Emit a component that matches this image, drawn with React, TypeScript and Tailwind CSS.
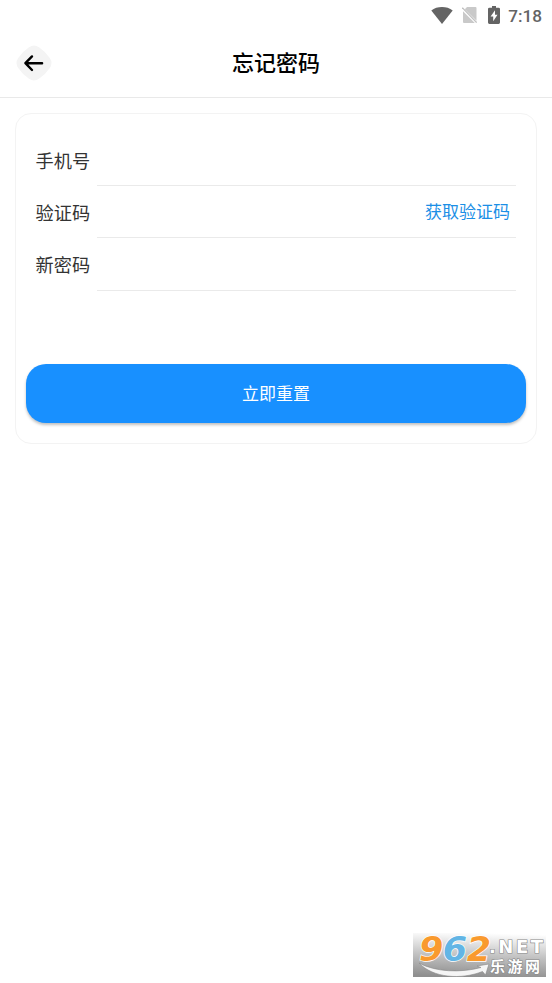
import React from 'react';

const StatusBar = () => {
  return (
    <div className="flex justify-end items-center pr-[10px] h-[30px] text-[#646464]">
      <svg className="mr-[9px] w-[22px] h-[17px]" viewBox="0 0 22 16" preserveAspectRatio="none" fill="currentColor">
        <path d="M0.3 3.2C3.2 1 7 0 11 0s7.800 1 10.700 3.200L11 16z" />
      </svg>
      <svg className="mr-[11px] w-[15px] h-[16px]" viewBox="0 0 15 16">
        <path d="M5 0h8.500q1 0 1 1v12.800L2.800 2.200zM1 4.200L12.800 16H2q-1 0-1-1z" fill="#c9c9c9" />
        <path d="M0.300 0.600L14.700 15.600" stroke="#c0c0c0" strokeWidth="1.300" />
      </svg>
      <svg className="mr-[8px] w-[12px] h-[18px]" viewBox="0 0 12 18">
        <path
          d="M4 0h4v1.800h2.600q1.400 0 1.400 1.300v13.500q0 1.400-1.400 1.400H1.400Q0 18 0 16.600V3.100q0-1.300 1.400-1.300H4z"
          fill="currentColor"
        />
        <path d="M7 4.200L2.600 10.600h2.600v4.700l4.300-6.500H7z" fill="#fff" />
      </svg>
      <span className="pt-[1px] font-['Roboto',sans-serif] font-medium text-[17.2px] leading-[28px]">7:18</span>
    </div>
  );
};

const Header = () => {
  return (
    <header className="grid grid-cols-[52px_1fr_52px] items-center border-[#e9e9e9] border-b h-[68px]">
      <button className="justify-self-end pb-[1px]" aria-label="返回">
        <svg className="block w-[36px] h-[36px]" viewBox="0 0 36 36" fill="none">
          <path
            d="M13 2.200Q18-1.200 23 2.200Q29.500 6.500 33.800 13Q37.200 18 33.800 23Q29.500 29.500 23 33.800Q18 37.200 13 33.800Q6.500 29.500 2.200 23Q-1.200 18 2.200 13Q6.500 6.500 13 2.200z"
            fill="#f4f4f4"
          />
          <path
            d="M16 11.400L9.400 18.200l6.600 6.800M9.800 18.200h16.300"
            stroke="#000"
            strokeWidth="2.400"
            strokeLinecap="round"
            strokeLinejoin="round"
          />
        </svg>
      </button>
      <h1 className="pb-[5px] font-medium text-[22px] text-black text-center leading-[32px]">忘记密码</h1>
    </header>
  );
};

const Field = ({ label, children }: { label: string; children?: React.ReactNode }) => {
  return (
    <div className="flex items-center h-[52.2px]">
      <label className="pt-[0.500px] w-[61px] text-[#333] text-[18.2px] whitespace-nowrap">{label}</label>
      <div className="flex flex-1 justify-end items-center pr-[6px] border-[#eaeaea] border-b h-full">{children}</div>
    </div>
  );
};

const Watermark = () => {
  return (
    <svg className="block w-[133px] h-[44px] overflow-visible" viewBox="0 0 133 44">
      <defs>
        <linearGradient id="plate" x1="0.550" y1="0" x2="0.450" y2="1">
          <stop offset="0" stopColor="#ffffff" />
          <stop offset="0.500" stopColor="#c4c4c4" />
          <stop offset="1" stopColor="#8f8f8f" />
        </linearGradient>
      </defs>
      <rect width="133" height="44" fill="url(#plate)" />
      <g
        transform="translate(6 27.500) scale(1.060 1)"
        fontFamily="DejaVu Sans, sans-serif"
        fontWeight="700"
        fontStyle="italic"
        fontSize="33"
        stroke="#fff"
        strokeWidth="1.400"
        paintOrder="stroke"
      >
        <text x="0" fill="#f99a2e">9</text>
        <text x="22.500" fill="#62b5e5">6</text>
        <text x="45" fill="#f99a2e">2</text>
      </g>
      <path
        d="M6 30C22 39 48 40 68 34.500L64 33L76 31L72.500 42L69.500 38.500C48 47 20 45 6 30z"
        fill="#f5f5f5"
        stroke="#888"
        strokeWidth="0.600"
      />
      <g fill="#fff" stroke="#888" strokeWidth="1.200" paintOrder="stroke" fontWeight="700">
        <text x="76" y="20" fontFamily="DejaVu Sans, sans-serif" fontSize="18" textLength="54">
          .NET
        </text>
        <text x="77" y="38.500" fontFamily="Noto Sans CJK SC, sans-serif" fontSize="15" textLength="50">
          乐游网
        </text>
      </g>
    </svg>
  );
};

const App = () => {
  return (
    <div className="flex flex-col bg-white h-[983px] font-['Noto_Sans_CJK_SC',sans-serif]">
      <StatusBar />
      <Header />
      <main className="flex-1 px-[15px] pt-[15px]">
        <section className="px-[10px] pt-[20px] border border-[#f3f3f3] rounded-[16px] h-[331px]">
          <div className="pr-[10px] pl-[9.500px]">
            <Field label="手机号" />
            <Field label="验证码">
              <button className="pb-[2px] text-[#1b8fe6] text-[17px]">获取验证码</button>
            </Field>
            <Field label="新密码" />
          </div>
          <button className="block bg-[#1890ff] shadow-[0_2px_3px_rgba(0,0,0,0.25)] mt-[73px] rounded-[20px] w-full h-[59px] text-[17px] text-white">
            立即重置
          </button>
        </section>
      </main>
      <footer className="flex justify-end pr-[6px] pb-[6px]">
        <Watermark />
      </footer>
    </div>
  );
};

export default App;
